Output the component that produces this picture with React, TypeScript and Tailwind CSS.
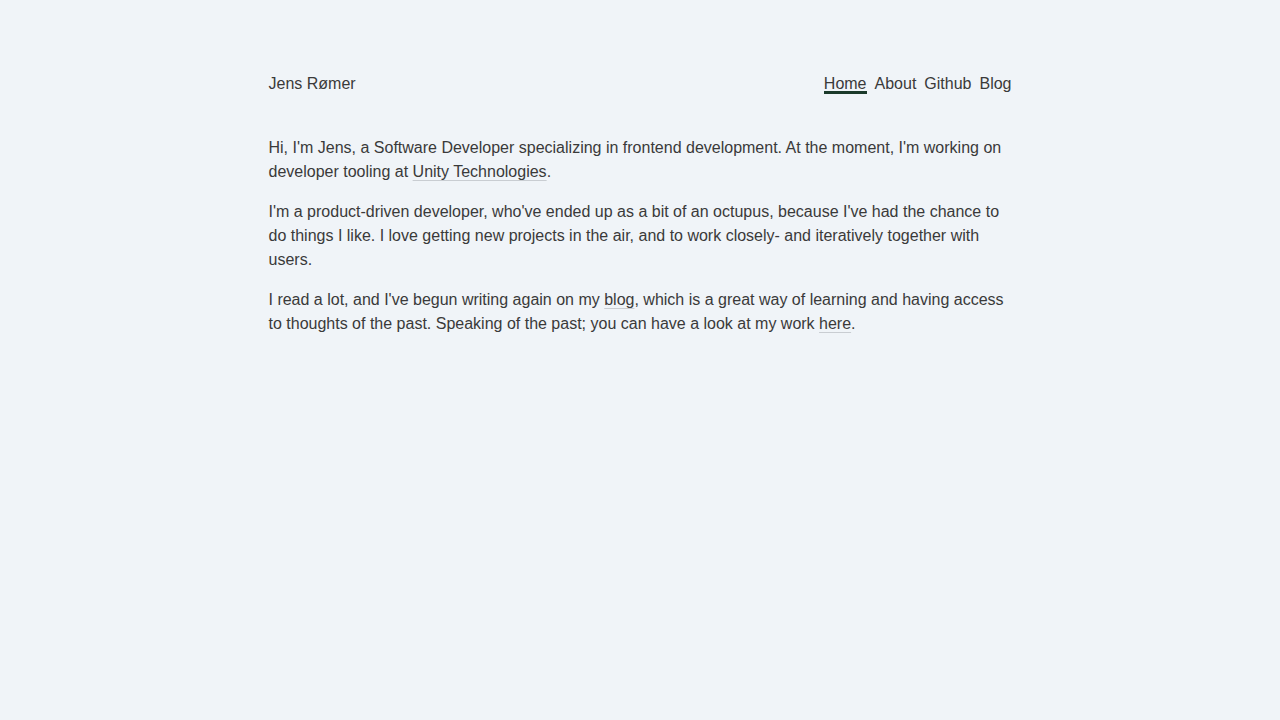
export default function App() {
  const link =
    "underline decoration-[#c9cdd2] decoration-1 underline-offset-[3px]";
  return (
    <div className="min-h-screen bg-[#f0f4f8] font-['Liberation_Sans',Arial,sans-serif] text-[16px] leading-6 text-[#3a3a3a]">
      <div className="max-w-[743px] mx-auto pt-[72px]">
        <header className="flex items-center justify-between">
          <a href="#">Jens Rømer</a>
          <nav className="flex items-center gap-2">
            <a href="#" className="relative">
              Home
              <span className="absolute left-0 right-0 top-[19px] h-[3px] bg-[#1b3a2b]" />
            </a>
            <a href="#">About</a>
            <a href="#">Github</a>
            <a href="#">Blog</a>
          </nav>
        </header>
        <main className="mt-10 flex flex-col gap-4">
          <p>
            Hi, I'm Jens, a Software Developer specializing in frontend
            development. At the moment, I'm working on developer tooling at{" "}
            <a href="#" className={link}>
              Unity Technologies
            </a>
            .
          </p>
          <p>
            I'm a product-driven developer, who've ended up as a bit of an
            octupus, because I've had the chance to do things I like. I love
            getting new projects in the air, and to work closely- and
            iteratively together with users.
          </p>
          <p>
            I read a lot, and I've begun writing again on my{" "}
            <a href="#" className={link}>
              blog
            </a>
            , which is a great way of learning and having access to thoughts
            of the past. Speaking of the past; you can have a look at my work{" "}
            <a href="#" className={link}>
              here
            </a>
            .
          </p>
        </main>
      </div>
    </div>
  );
}
